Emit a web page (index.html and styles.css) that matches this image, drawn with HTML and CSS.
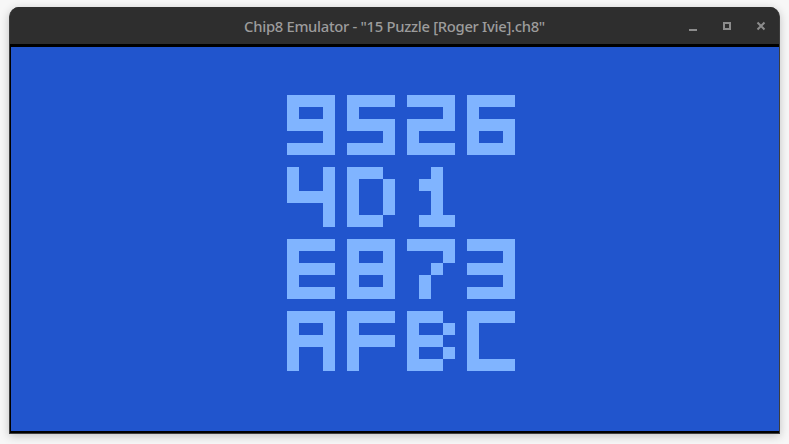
FILE: index.html
```html
<!DOCTYPE html>
<html>
<head>
<meta charset="utf-8">
<title>Chip8 Emulator</title>
<link rel="stylesheet" href="styles.css">
</head>
<body>
<div class="window">
  <div class="titlebar">
    <div class="title">Chip8 Emulator - "15 Puzzle [Roger Ivie].ch8"</div>
    <div class="controls">
      <svg class="btn" width="14" height="14" viewBox="0 0 14 14"><rect x="3" y="10" width="8" height="2" fill="#8c8c8c"/></svg>
      <svg class="btn" width="14" height="14" viewBox="0 0 14 14"><rect x="4" y="4" width="6" height="6" fill="none" stroke="#8c8c8c" stroke-width="2"/></svg>
      <svg class="btn" width="14" height="14" viewBox="0 0 14 14"><path d="M3.5 3.5 L10.5 10.5 M10.5 3.5 L3.5 10.5" stroke="#8c8c8c" stroke-width="2"/></svg>
    </div>
  </div>
  <div class="frame">
    <div class="screen">
      <div class="board">
        <div class="row">
          <div class="glyph" aria-label="9"><i class="x"></i><i class="x"></i><i class="x"></i><i class="x"></i><i class="x"></i><i></i><i></i><i class="x"></i><i class="x"></i><i class="x"></i><i class="x"></i><i class="x"></i><i></i><i></i><i></i><i class="x"></i><i class="x"></i><i class="x"></i><i class="x"></i><i class="x"></i></div>
          <div class="glyph" aria-label="5"><i class="x"></i><i class="x"></i><i class="x"></i><i class="x"></i><i class="x"></i><i></i><i></i><i></i><i class="x"></i><i class="x"></i><i class="x"></i><i class="x"></i><i></i><i></i><i></i><i class="x"></i><i class="x"></i><i class="x"></i><i class="x"></i><i class="x"></i></div>
          <div class="glyph" aria-label="2"><i class="x"></i><i class="x"></i><i class="x"></i><i class="x"></i><i></i><i></i><i></i><i class="x"></i><i class="x"></i><i class="x"></i><i class="x"></i><i class="x"></i><i class="x"></i><i></i><i></i><i></i><i class="x"></i><i class="x"></i><i class="x"></i><i class="x"></i></div>
          <div class="glyph" aria-label="6"><i class="x"></i><i class="x"></i><i class="x"></i><i class="x"></i><i class="x"></i><i></i><i></i><i></i><i class="x"></i><i class="x"></i><i class="x"></i><i class="x"></i><i class="x"></i><i></i><i></i><i class="x"></i><i class="x"></i><i class="x"></i><i class="x"></i><i class="x"></i></div>
        </div>
        <div class="row">
          <div class="glyph" aria-label="4"><i class="x"></i><i></i><i></i><i class="x"></i><i class="x"></i><i></i><i></i><i class="x"></i><i class="x"></i><i class="x"></i><i class="x"></i><i class="x"></i><i></i><i></i><i></i><i class="x"></i><i></i><i></i><i></i><i class="x"></i></div>
          <div class="glyph" aria-label="D"><i class="x"></i><i class="x"></i><i class="x"></i><i></i><i class="x"></i><i></i><i></i><i class="x"></i><i class="x"></i><i></i><i></i><i class="x"></i><i class="x"></i><i></i><i></i><i class="x"></i><i class="x"></i><i class="x"></i><i class="x"></i><i></i></div>
          <div class="glyph" aria-label="1"><i></i><i></i><i class="x"></i><i></i><i></i><i class="x"></i><i class="x"></i><i></i><i></i><i></i><i class="x"></i><i></i><i></i><i></i><i class="x"></i><i></i><i></i><i class="x"></i><i class="x"></i><i class="x"></i></div>
        </div>
        <div class="row">
          <div class="glyph" aria-label="E"><i class="x"></i><i class="x"></i><i class="x"></i><i class="x"></i><i class="x"></i><i></i><i></i><i></i><i class="x"></i><i class="x"></i><i class="x"></i><i class="x"></i><i class="x"></i><i></i><i></i><i></i><i class="x"></i><i class="x"></i><i class="x"></i><i class="x"></i></div>
          <div class="glyph" aria-label="8"><i class="x"></i><i class="x"></i><i class="x"></i><i class="x"></i><i class="x"></i><i></i><i></i><i class="x"></i><i class="x"></i><i class="x"></i><i class="x"></i><i class="x"></i><i class="x"></i><i></i><i></i><i class="x"></i><i class="x"></i><i class="x"></i><i class="x"></i><i class="x"></i></div>
          <div class="glyph" aria-label="7"><i class="x"></i><i class="x"></i><i class="x"></i><i class="x"></i><i></i><i></i><i></i><i class="x"></i><i></i><i></i><i class="x"></i><i></i><i></i><i class="x"></i><i></i><i></i><i></i><i class="x"></i><i></i><i></i></div>
          <div class="glyph" aria-label="3"><i class="x"></i><i class="x"></i><i class="x"></i><i class="x"></i><i></i><i></i><i></i><i class="x"></i><i class="x"></i><i class="x"></i><i class="x"></i><i class="x"></i><i></i><i></i><i></i><i class="x"></i><i class="x"></i><i class="x"></i><i class="x"></i><i class="x"></i></div>
        </div>
        <div class="row">
          <div class="glyph" aria-label="A"><i class="x"></i><i class="x"></i><i class="x"></i><i class="x"></i><i class="x"></i><i></i><i></i><i class="x"></i><i class="x"></i><i class="x"></i><i class="x"></i><i class="x"></i><i class="x"></i><i></i><i></i><i class="x"></i><i class="x"></i><i></i><i></i><i class="x"></i></div>
          <div class="glyph" aria-label="F"><i class="x"></i><i class="x"></i><i class="x"></i><i class="x"></i><i class="x"></i><i></i><i></i><i></i><i class="x"></i><i class="x"></i><i class="x"></i><i class="x"></i><i class="x"></i><i></i><i></i><i></i><i class="x"></i><i></i><i></i><i></i></div>
          <div class="glyph" aria-label="B"><i class="x"></i><i class="x"></i><i class="x"></i><i></i><i class="x"></i><i></i><i></i><i class="x"></i><i class="x"></i><i class="x"></i><i class="x"></i><i></i><i class="x"></i><i></i><i></i><i class="x"></i><i class="x"></i><i class="x"></i><i class="x"></i><i></i></div>
          <div class="glyph" aria-label="C"><i class="x"></i><i class="x"></i><i class="x"></i><i class="x"></i><i class="x"></i><i></i><i></i><i></i><i class="x"></i><i></i><i></i><i></i><i class="x"></i><i></i><i></i><i></i><i class="x"></i><i class="x"></i><i class="x"></i><i class="x"></i></div>
        </div>
      </div>
    </div>
  </div>
</div>
</body>
</html>
```
FILE: styles.css
```css
html, body {
  margin: 0;
  padding: 0;
}
body {
  background: #f7f7f7;
  width: 789px;
  height: 444px;
  overflow: hidden;
  padding: 7px 0 0 9px;
  box-sizing: border-box;
}
.window {
  width: 771px;
  box-sizing: border-box;
  border-radius: 10px 10px 0 0;
  background: #2e2e2e;
  border: 1px solid #3d3d3d;
  border-top: none;
  box-shadow: 0 2px 10px rgba(0, 0, 0, 0.22);
  overflow: hidden;
}
.titlebar {
  height: 37px;
  display: flex;
  align-items: center;
  justify-content: center;
  position: relative;
  background: #2e2e2e;
}
.title {
  font-family: "Noto Sans", sans-serif;
  font-size: 14.8px;
  font-weight: 500;
  color: #9c9c9c;
  letter-spacing: -0.3px;
  margin-top: 1px;
}
.controls {
  position: absolute;
  right: 11px;
  top: 12px;
  display: flex;
  gap: 20px;
}
.btn {
  display: block;
}
.frame {
  background: #000;
  padding: 3px 0 2px 1px;
}
.screen {
  width: 768px;
  height: 384px;
  background: #2155cd;
  padding: 48px 0 0 276px;
  box-sizing: border-box;
}
.board {
  display: flex;
  flex-direction: column;
  gap: 12px;
}
.row {
  display: flex;
  gap: 12px;
}
.glyph {
  display: grid;
  grid-template-columns: repeat(4, 12px);
  grid-template-rows: repeat(5, 12px);
}
.glyph i {
  display: block;
}
.glyph i.x {
  background: #80b4ff;
}
```
